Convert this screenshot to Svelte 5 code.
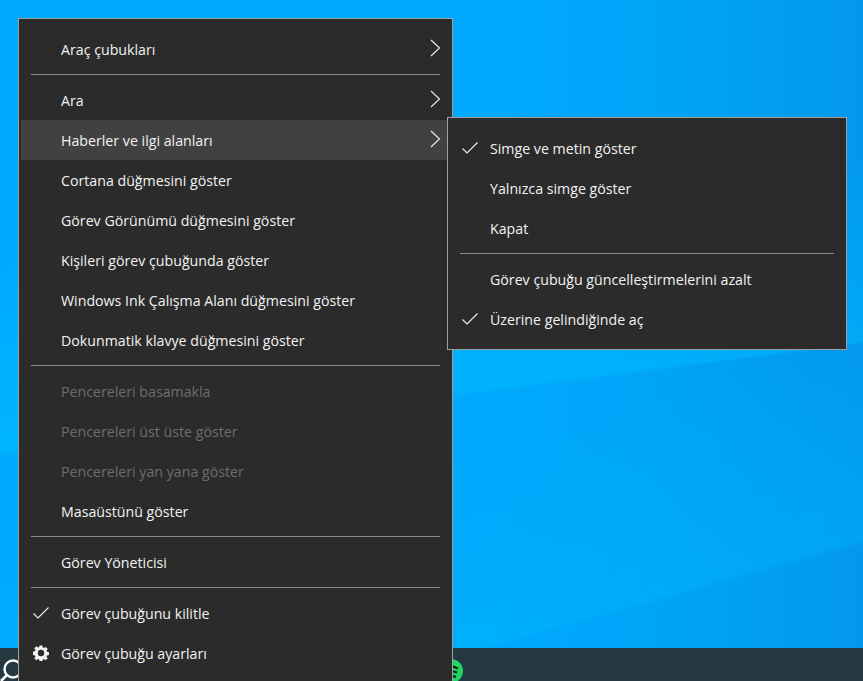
<script>
  const mainGroups = [
    [{ t: 'Araç çubukları', arrow: true }],
    [
      { t: 'Ara', arrow: true },
      { t: 'Haberler ve ilgi alanları', arrow: true, active: true },
      { t: 'Cortana düğmesini göster' },
      { t: 'Görev Görünümü düğmesini göster' },
      { t: 'Kişileri görev çubuğunda göster' },
      { t: 'Windows Ink Çalışma Alanı düğmesini göster' },
      { t: 'Dokunmatik klavye düğmesini göster' }
    ],
    [
      { t: 'Pencereleri basamakla', off: true },
      { t: 'Pencereleri üst üste göster', off: true },
      { t: 'Pencereleri yan yana göster', off: true },
      { t: 'Masaüstünü göster' }
    ],
    [{ t: 'Görev Yöneticisi' }],
    [
      { t: 'Görev çubuğunu kilitle', check: true },
      { t: 'Görev çubuğu ayarları', gear: true }
    ]
  ];
  const subGroups = [
    [
      { t: 'Simge ve metin göster', check: true },
      { t: 'Yalnızca simge göster' },
      { t: 'Kapat' }
    ],
    [
      { t: 'Görev çubuğu güncelleştirmelerini azalt' },
      { t: 'Üzerine gelindiğinde aç', check: true }
    ]
  ];
</script>

{#snippet menu(groups, cls)}
  <div class="menu {cls}">
    {#each groups as group, i}
      {#if i > 0}<div class="sep"></div>{/if}
      {#each group as item}
        <div class="row" class:active={item.active} class:off={item.off}>
          <span class="icon">
            {#if item.check}
              <svg width="16" height="12" viewBox="0 0 16 12"><path d="M0.5 6.5 L5 11 L15.5 0.5" fill="none" stroke="#f0f0f0" stroke-width="1.1"/></svg>
            {:else if item.gear}
              <svg width="16" height="16" viewBox="0 0 16 16"><path fill="#f2f2f2" fill-rule="evenodd" d="M6.6 0.5h2.8l.4 2.1 1.1.5 1.8-1.2 2 2-1.2 1.8.5 1.1 2.1.4v2.8l-2.1.4-.5 1.1 1.2 1.8-2 2-1.8-1.2-1.1.5-.4 2.1H6.6l-.4-2.1-1.1-.5-1.8 1.2-2-2 1.2-1.8-.5-1.1-2.1-.4V6.6l2.1-.4.5-1.1-1.2-1.8 2-2 1.8 1.2 1.1-.5zM8 4.8a3.2 3.2 0 1 0 0 6.4 3.2 3.2 0 0 0 0-6.4z"/></svg>
            {/if}
          </span>
          <span class="label">{item.t}</span>
          {#if item.arrow}
            <svg class="arrow" width="11" height="18" viewBox="0 0 11 18"><path d="M1 1 L9.5 9 L1 17" fill="none" stroke="#f0f0f0" stroke-width="1.1"/></svg>
          {/if}
        </div>
      {/each}
    {/each}
  </div>
{/snippet}

<div class="desktop">
  <div class="wallpaper"></div>
  <div class="taskbar">
    <svg class="search" width="24" height="33" viewBox="0 0 24 33"><circle cx="13" cy="21" r="8.5" fill="none" stroke="#fff" stroke-width="2.4"/><path d="M7 27 L1 33" stroke="#fff" stroke-width="2.6"/></svg>
    <svg class="spotify" width="24" height="24" viewBox="0 0 24 24"><circle cx="12" cy="12" r="12" fill="#1ed760"/><path d="M4 8q8-2 15 1.500M5 12.500q7-1.500 13 1M6 17q6-1 11 1" fill="none" stroke="#191414" stroke-width="2"/></svg>
  </div>
  {@render menu(mainGroups, 'main')}
  {@render menu(subGroups, 'sub')}
</div>

<style>
  :global(body) { margin: 0; }
  .desktop {
    position: relative;
    width: 863px;
    height: 681px;
    overflow: hidden;
    display: flex;
    flex-direction: column;
    font-family: "Open Sans", sans-serif;
  }
  .wallpaper {
    flex: 1;
    background:
      linear-gradient(172.7deg, transparent 35%, rgba(0, 190, 255, 0.45) 59.5%, transparent 60%),
      linear-gradient(164.3deg, transparent 65%, rgba(0, 190, 255, 0.3) 87.6%, transparent 88.5%),
      linear-gradient(to right, #00abff 0%, #00a9fd 55%, #00a5f8 75%, #0298ee 100%);
  }
  .taskbar {
    height: 33px;
    background: #233840;
    position: relative;
  }
  .search { position: absolute; left: 0; top: 0; }
  .spotify { position: absolute; left: 439px; top: 11px; }
  .menu {
    position: absolute;
    box-sizing: border-box;
    background: #2b2b2b;
    border: 1px solid #a0a0a0;
    padding: 10px 2px;
  }
  .main { left: 18px; top: 18px; width: 435px; }
  .sub { left: 447px; top: 117px; width: 400px; }
  .row {
    height: 40px;
    display: flex;
    align-items: center;
    color: #f2f2f2;
    font-size: 14.2px;
    position: relative;
  }
  .row.active { background: #414141; }
  .row.off { color: #6d6d6d; }
  .icon {
    width: 40px;
    flex: none;
    display: flex;
    justify-content: center;
  }
  .arrow { position: absolute; right: 9px; top: 10px; }
  .sep {
    height: 1px;
    margin: 5px 10px;
    background: #8a8a8a;
  }
</style>
